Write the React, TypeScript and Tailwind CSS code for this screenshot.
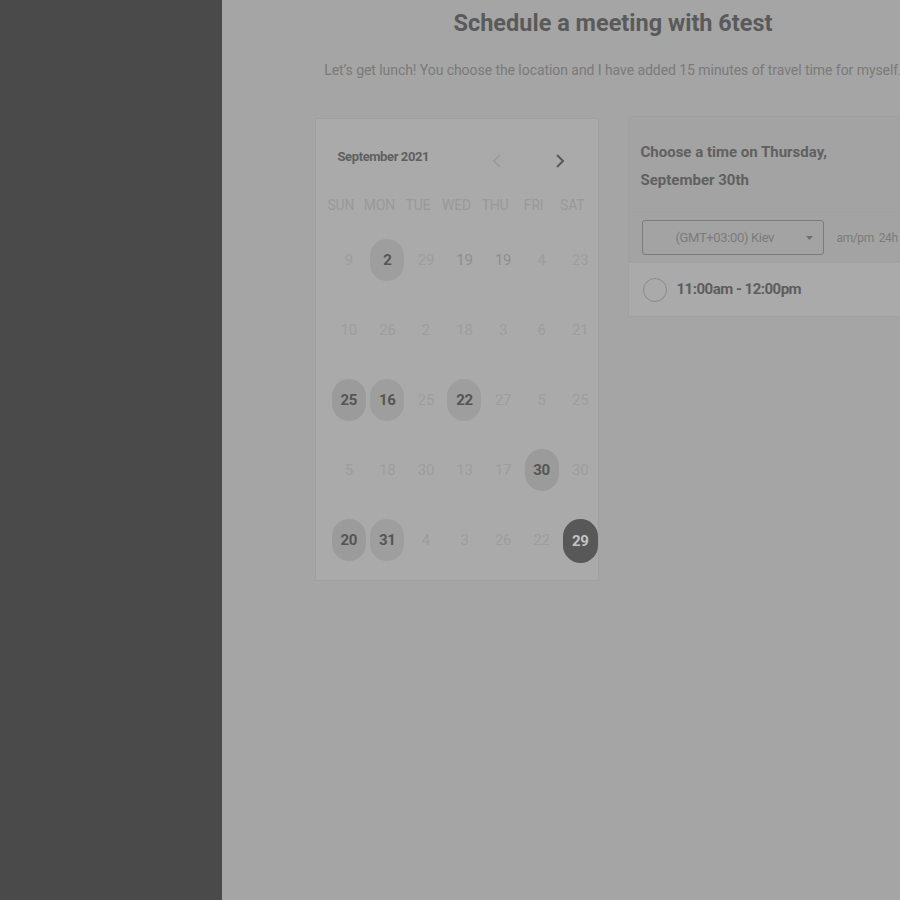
type Day = { n: number; kind?: "dim" | "mid" | "open" | "openAlt" | "selected" };

const weeks: Day[][] = [
  [{ n: 9 }, { n: 2, kind: "openAlt" }, { n: 29 }, { n: 19, kind: "mid" }, { n: 19, kind: "mid" }, { n: 4 }, { n: 23 }],
  [{ n: 10 }, { n: 26 }, { n: 2 }, { n: 18 }, { n: 3 }, { n: 6 }, { n: 21 }],
  [{ n: 25, kind: "open" }, { n: 16, kind: "openAlt" }, { n: 25 }, { n: 22, kind: "openAlt" }, { n: 27 }, { n: 5 }, { n: 25 }],
  [{ n: 5 }, { n: 18 }, { n: 30 }, { n: 13 }, { n: 17 }, { n: 30, kind: "open" }, { n: 30 }],
  [{ n: 20, kind: "open" }, { n: 31, kind: "openAlt" }, { n: 4 }, { n: 3 }, { n: 26 }, { n: 22 }, { n: 29, kind: "selected" }],
];

const weekdays = ["SUN", "MON", "TUE", "WED", "THU", "FRI", "SAT"];

function DayCell({ day }: { day: Day }) {
  if (day.kind === "selected") {
    return (
      <div className="flex h-[44px] w-[35px] items-center justify-center rounded-full bg-[#585858] text-[15px] font-bold tracking-[-0.3px] text-[#c4c4c4]">
        {day.n}
      </div>
    );
  }
  if (day.kind === "open" || day.kind === "openAlt") {
    return (
      <div
        className={`flex h-[42px] w-[34px] items-center justify-center rounded-full text-[15px] font-bold tracking-[-0.3px] text-[#555555] ${
          day.kind === "open" ? "bg-[#9b9b9b]" : "bg-[#9e9e9e]"
        }`}
      >
        {day.n}
      </div>
    );
  }
  return (
    <div
      className={`flex h-[42px] w-[34px] items-center justify-center text-[15px] tracking-[-0.3px] ${
        day.kind === "mid" ? "text-[#8e8e8e]" : "text-[#9d9d9d]"
      }`}
    >
      {day.n}
    </div>
  );
}

export default function App() {
  return (
    <div className="flex h-[900px] w-[900px] overflow-hidden bg-[#a5a5a5] font-['Roboto',sans-serif]">
      <aside className="w-[222px] shrink-0 bg-[#4a4a4a]" />

      <main className="flex w-[782px] shrink-0 flex-col items-center pt-[7px]">
        <h1 className="text-[23.5px] font-bold leading-[32px] text-[#5a5a5a]">
          Schedule a meeting with 6test
        </h1>
        <p className="mt-[22px] whitespace-nowrap text-[14px] leading-[18px] tracking-[-0.06px] text-[#7a7a7a]">
          Let’s get lunch! You choose the location and I have added 15 minutes of travel time for myself.
        </p>

        <div className="mt-[39px] flex items-start gap-[29px]">
          {/* calendar */}
          <section className="w-[284px] rounded-[2px] border border-[#a0a0a0] bg-[#aaaaaa] px-[6px] pb-[17px]">
            <div className="flex h-[76px] items-center pl-[16px] pr-[27px]">
              <span className="text-[13px] font-bold tracking-[-0.4px] text-[#606060]">September 2021</span>
              <div className="ml-auto flex items-center gap-[53px] pt-[8px]">
                <svg width="10" height="16" viewBox="0 0 10 16" fill="none">
                  <path d="M8 2 2 8l6 6" stroke="#999999" strokeWidth="1.6" />
                </svg>
                <svg width="10" height="16" viewBox="0 0 10 16" fill="none">
                  <path d="M2 2l6 6-6 6" stroke="#585858" strokeWidth="2" />
                </svg>
              </div>
            </div>
            <div className="grid grid-cols-7 text-center text-[14px] tracking-[-0.2px] text-[#999999]">
              {weekdays.map((w) => (
                <div key={w}>{w}</div>
              ))}
            </div>
            <div className="-mr-[8px] ml-[8px] mt-[23px] flex flex-col gap-[28px]">
              {weeks.map((week, i) => (
                <div key={i} className="grid grid-cols-7">
                  {week.map((d, j) => (
                    <div key={j} className="flex justify-center">
                      <DayCell day={d} />
                    </div>
                  ))}
                </div>
              ))}
            </div>
          </section>

          {/* time picker */}
          <section className="-mt-[2px] w-[284px] rounded-[2px] border border-[#a0a0a0] bg-[#aaaaaa]">
            <div className="bg-[#a3a3a3] px-[12px] pb-[18px] pt-[21px] text-[15px] font-bold leading-[28px] text-[#606060]">
              Choose a time on Thursday,
              <br />
              September 30th
            </div>
            <div className="flex h-[50px] items-center border-t border-[#a0a0a0] bg-[#a3a3a3] pl-[13px]">
              <div className="flex h-[35px] w-[182px] items-center rounded-[3px] border border-[#7b7b7b] pl-[33px] pr-[10px] text-[13px] tracking-[-0.35px] text-[#7b7b7b]">
                <span>(GMT+03:00) Kiev</span>
                <svg className="ml-auto" width="7" height="4" viewBox="0 0 7 4">
                  <path d="M0 0h7L3.5 4z" fill="#6e6e6e" />
                </svg>
              </div>
              <span className="ml-[13px] text-[12px] tracking-[-0.4px] text-[#7b7b7b]">am/pm</span>
              <span className="ml-[5px] text-[12px] tracking-[-0.4px] text-[#7b7b7b]">24h</span>
            </div>
            <div className="flex h-[54px] items-center border-t border-[#a0a0a0] pl-[14px]">
              <div className="h-[24px] w-[24px] rounded-full border-[1.5px] border-[#8a8a8a]" />
              <span className="ml-[10px] text-[15px] font-bold tracking-[-0.5px] text-[#5e5e5e]">11:00am - 12:00pm</span>
            </div>
          </section>
        </div>
      </main>
    </div>
  );
}
